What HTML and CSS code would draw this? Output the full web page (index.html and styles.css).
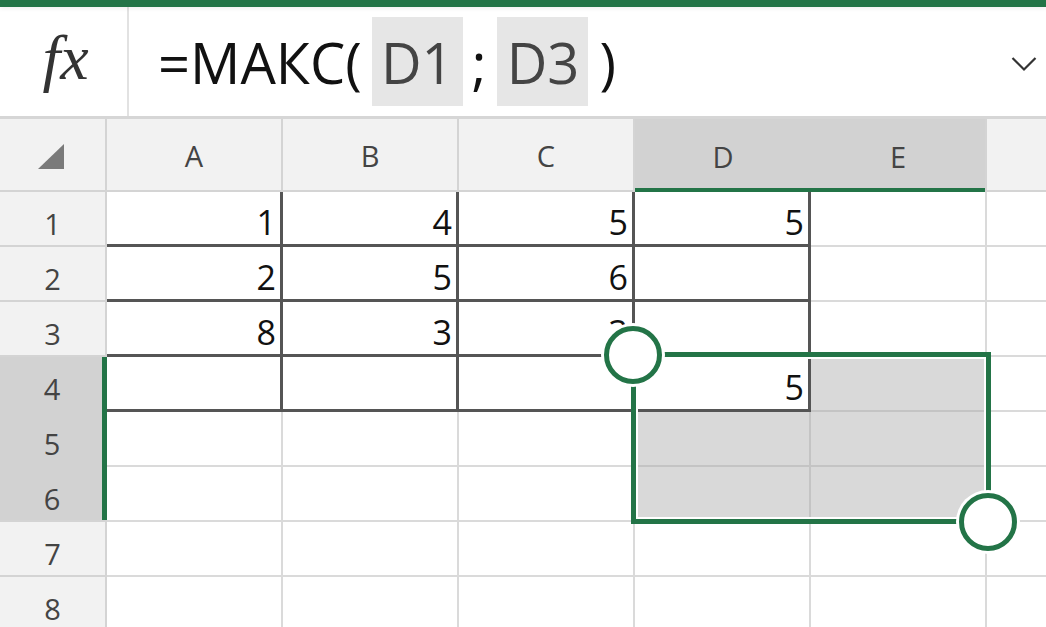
FILE: index.html
```html
<!DOCTYPE html>
<html lang="ru">
<head>
<meta charset="utf-8">
<title>Excel</title>
<link rel="stylesheet" href="styles.css">
</head>
<body>
<div class="topbar"></div>
<div class="fbar">
  <div class="fx">fx</div>
  <div class="formula">
    <span class="fn">=МАКС(</span>
    <span class="ref">D1</span>
    <span class="sep">;</span>
    <span class="ref">D3</span>
    <span class="par">)</span>
  </div>
  <svg class="chev" width="26" height="16" viewBox="0 0 26 16"><path d="M1.5 2 L13 13.5 L24.5 2" fill="none" stroke="#333" stroke-width="2.2"/></svg>
</div>
<div class="sheet">
  <div class="c hd corner"><svg width="26" height="25" viewBox="0 0 26 25"><path d="M26 0 L26 25 L0 25 Z" fill="#7a7a7a"/></svg></div>
  <div class="c hd">A</div>
  <div class="c hd">B</div>
  <div class="c hd">C</div>
  <div class="c hd hsel hsel-first">D</div>
  <div class="c hd hsel">E</div>
  <div class="c hd"></div>

  <div class="c rh">1</div>
  <div class="c v dk">1</div>
  <div class="c v dk">4</div>
  <div class="c v dk">5</div>
  <div class="c v dk">5</div>
  <div class="c v"></div>
  <div class="c v"></div>

  <div class="c rh">2</div>
  <div class="c v dk">2</div>
  <div class="c v dk">5</div>
  <div class="c v dk">6</div>
  <div class="c v dk"></div>
  <div class="c v"></div>
  <div class="c v"></div>

  <div class="c rh">3</div>
  <div class="c v dk">8</div>
  <div class="c v dk">3</div>
  <div class="c v dk">3</div>
  <div class="c v dk"></div>
  <div class="c v"></div>
  <div class="c v"></div>

  <div class="c rh rsel">4</div>
  <div class="c v dk"></div>
  <div class="c v dk"></div>
  <div class="c v dk"></div>
  <div class="c v dk">5</div>
  <div class="c v gr"></div>
  <div class="c v"></div>

  <div class="c rh rsel">5</div>
  <div class="c v"></div>
  <div class="c v"></div>
  <div class="c v"></div>
  <div class="c v gr"></div>
  <div class="c v gr"></div>
  <div class="c v"></div>

  <div class="c rh rsel rsel-last">6</div>
  <div class="c v"></div>
  <div class="c v"></div>
  <div class="c v"></div>
  <div class="c v gr"></div>
  <div class="c v gr"></div>
  <div class="c v"></div>

  <div class="c rh">7</div>
  <div class="c v"></div>
  <div class="c v"></div>
  <div class="c v"></div>
  <div class="c v"></div>
  <div class="c v"></div>
  <div class="c v"></div>

  <div class="c rh">8</div>
  <div class="c v"></div>
  <div class="c v"></div>
  <div class="c v"></div>
  <div class="c v"></div>
  <div class="c v"></div>
  <div class="c v"></div>

  <div class="selbox"></div>
  <div class="handle handle-tl"></div>
  <div class="handle handle-br"></div>
</div>
</body>
</html>
```
FILE: styles.css
```css
html, body {
  margin: 0;
  padding: 0;
  background: #fff;
}
body {
  width: 1046px;
  height: 627px;
  overflow: hidden;
  font-family: "Open Sans", "Noto Sans", sans-serif;
}
.topbar {
  height: 7px;
  background: #237447;
  box-shadow: 0 2px 4px rgba(0, 0, 0, 0.06);
  position: relative;
  z-index: 2;
}
.fbar {
  height: 109px;
  border-bottom: 3px solid #d6d6d6;
  display: flex;
  align-items: center;
  background: #fff;
}
.fx {
  width: 129px;
  height: 100%;
  border-right: 2px solid #e2e2e2;
  display: flex;
  align-items: center;
  justify-content: center;
  font-family: "Liberation Serif", "DejaVu Serif", serif;
  font-style: italic;
  font-size: 64px;
  color: #333;
  box-sizing: border-box;
  padding: 0 0 8px 4px;
}
.formula {
  display: flex;
  align-items: center;
  margin-left: 29px;
  font-size: 56px;
  color: #111;
  height: 100%;
}
.fn {
  line-height: 1;
}
.ref {
  width: 91px;
  height: 89px;
  background: #e6e6e6;
  color: #444;
  display: flex;
  align-items: center;
  justify-content: center;
  line-height: 1;
}
.fn + .ref {
  margin-left: 10px;
}
.sep {
  margin: 0 11px 0 9px;
  line-height: 1;
}
.par {
  margin-left: 11px;
  line-height: 1;
}
.chev {
  margin-left: auto;
  margin-right: 9px;
  margin-top: 5px;
}
.sheet {
  position: relative;
  display: grid;
  grid-template-columns: 107px repeat(6, 176px);
  grid-template-rows: 73px repeat(8, 55px);
  width: 1046px;
  height: 508px;
  overflow: hidden;
}
.c {
  box-sizing: border-box;
  border-right: 2px solid #dadada;
  border-bottom: 2px solid #dadada;
}
.hd {
  background: #f2f2f2;
  border-color: #d4d4d4;
  display: flex;
  align-items: center;
  justify-content: center;
  font-size: 29px;
  color: #444;
  padding-top: 2px;
}
.corner {
  padding: 0 41px 0 0;
  justify-content: flex-end;
  padding-top: 4px;
}
.hsel {
  background: #d2d2d2;
  border-bottom: 0;
  border-right: 0;
  box-shadow: inset 0 -4px 0 #237447;
}
.hsel + .hsel {
  border-right: 2px solid #d4d4d4;
}
.rh {
  background: #f2f2f2;
  border-color: #d4d4d4;
  display: flex;
  align-items: flex-end;
  justify-content: center;
  font-size: 29px;
  color: #444;
  line-height: 1;
  padding-bottom: 7px;
}
.rsel {
  background: #d2d2d2;
  border-right: 0;
  border-bottom: 0;
  box-shadow: inset -5px 0 0 #237447;
  padding-right: 3px;
  padding-bottom: 9px;
}
.rsel-last {
  border-bottom: 2px solid #d4d4d4;
  padding-bottom: 7px;
}
.v {
  display: flex;
  align-items: flex-end;
  justify-content: flex-end;
  font-size: 34px;
  line-height: 1;
  color: #111;
  padding: 0 4px 5px 0;
}
.dk {
  border-right: 3px solid #555;
  border-bottom: 3px solid #555;
}
.gr {
  background: #d9d9d9;
  border-right-color: #c4c4c4;
  border-bottom-color: #c4c4c4;
}
.selbox {
  position: absolute;
  left: 631px;
  top: 233px;
  width: 360px;
  height: 172px;
  box-sizing: border-box;
  border: 5px solid #237447;
  box-shadow: inset 0 0 0 2px #fff;
}
.handle {
  position: absolute;
  width: 58px;
  height: 58px;
  box-sizing: border-box;
  border-radius: 50%;
  border: 5px solid #237447;
  background: #fff;
  box-shadow: 0 0 0 3px #fff;
}
.handle-tl {
  left: 604px;
  top: 207px;
}
.handle-br {
  left: 959px;
  top: 374px;
}
```
